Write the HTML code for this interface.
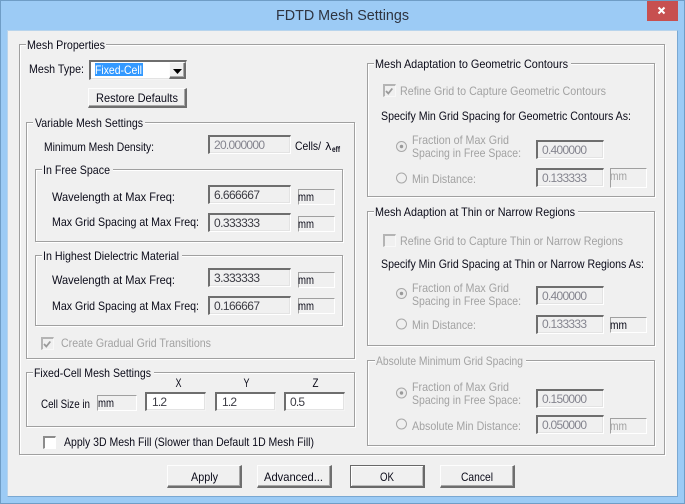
<!DOCTYPE html>
<html><head><meta charset="utf-8"><title>FDTD Mesh Settings</title>
<style>
html,body{margin:0;padding:0}
#w{position:relative;width:685px;height:504px;overflow:hidden;background:#9ccbf5;font-family:"Liberation Sans",sans-serif}
#w div{position:absolute;box-sizing:border-box}
.g{border:1px solid #a0a0a0;box-shadow:1px 1px 0 #fff,inset 1px 1px 0 #fff}
.l{background:#f0f0f0;height:12px}
.f{background:#f0f0f0;border-style:solid;border-width:2px 1px 1px 2px;border-color:#6e6e6e #fff #fff #6e6e6e;box-shadow:inset -1px -1px 0 #e3e3e3}
.w{background:#fff;border-color:#6e6e6e #f4f4f4 #f4f4f4 #6e6e6e}
.m{background:#f0f0f0;border-style:solid;border-width:1px;border-color:#a0a0a0 #fff #fff #a0a0a0}
.b{background:#f0f0f0;border-style:solid;border-width:1px 2px 2px 1px;border-color:#fdfdfd #6e6e6e #6e6e6e #fdfdfd;box-shadow:inset -1px -1px 0 #a8a8a8}
.c{border-style:solid;border-width:2px 1px 1px 2px;border-color:#8c8c8c #fff #fff #8c8c8c;background:#fff}
.c.n{background:#f0f0f0;border-color:#b4b4b4 #f8f8f8 #f8f8f8 #b4b4b4}
svg{position:absolute;left:0;top:0}
text{font-family:"Liberation Sans",sans-serif;font-size:12px;fill:#0a0a18}
.d{fill:#a2a2a2}
.v{fill:#3c3c44}
.x{fill:#85858f}
</style></head><body><div id="w">
<div style="left:0;top:0;width:685px;height:504px;border:1px solid #6f9dc6"></div>
<div style="left:647px;top:1px;width:31px;height:20px;background:#c75050"></div>
<div style="left:7px;top:30px;width:671px;height:467px;background:#f0f0f0;border:1px solid #7aa8d2;border-top-color:#b8d4ec;border-left-color:#b8d4ec"></div>

<div class="g" style="left:19px;top:44px;width:646px;height:411px"></div><div class="l" style="left:26px;top:39px;width:80px"></div>
<div class="g" style="left:26px;top:122px;width:329px;height:237px"></div><div class="l" style="left:33px;top:117px;width:112px"></div>
<div class="g" style="left:35px;top:169px;width:308px;height:73px"></div><div class="l" style="left:42px;top:164px;width:71px"></div>
<div class="g" style="left:35px;top:255px;width:308px;height:71px"></div><div class="l" style="left:42px;top:250px;width:140px"></div>
<div class="g" style="left:26px;top:372px;width:329px;height:55px"></div><div class="l" style="left:33px;top:367px;width:121px"></div>
<div class="g" style="left:367px;top:63px;width:288px;height:134px"></div><div class="l" style="left:374px;top:58px;width:197px"></div>
<div class="g" style="left:367px;top:211px;width:288px;height:135px"></div><div class="l" style="left:374px;top:206px;width:204px"></div>
<div class="g" style="left:367px;top:360px;width:288px;height:86px"></div><div class="l" style="left:375px;top:355px;width:151px"></div>

<div class="f w" style="left:89px;top:60px;width:98px;height:20px"></div>
<div style="left:95px;top:63px;width:48px;height:13px;background:#3399ff"></div>
<div class="b" style="left:169px;top:62px;width:17px;height:17px"></div>
<div class="b" style="left:88px;top:88px;width:99px;height:20px"></div>

<div class="f" style="left:208px;top:135px;width:83px;height:19px"></div>
<div class="f" style="left:208px;top:185px;width:83px;height:19px"></div><div class="m" style="left:298px;top:189px;width:37px;height:16px"></div>
<div class="f" style="left:208px;top:213px;width:83px;height:19px"></div><div class="m" style="left:298px;top:216px;width:37px;height:16px"></div>
<div class="f" style="left:208px;top:268px;width:83px;height:19px"></div><div class="m" style="left:298px;top:272px;width:37px;height:16px"></div>
<div class="f" style="left:208px;top:296px;width:83px;height:19px"></div><div class="m" style="left:298px;top:298px;width:37px;height:16px"></div>

<div class="m" style="left:97px;top:395px;width:40px;height:16px"></div>
<div class="f w" style="left:145px;top:392px;width:61px;height:19px"></div>
<div class="f w" style="left:215px;top:392px;width:61px;height:19px"></div>
<div class="f w" style="left:284px;top:392px;width:61px;height:19px"></div>

<div class="f" style="left:536px;top:140px;width:68px;height:19px"></div>
<div class="f" style="left:536px;top:168px;width:68px;height:19px"></div><div class="m" style="left:610px;top:168px;width:37px;height:20px"></div>
<div class="f" style="left:536px;top:286px;width:68px;height:19px"></div>
<div class="f" style="left:536px;top:315px;width:68px;height:19px"></div><div class="m" style="left:610px;top:317px;width:37px;height:16px"></div>
<div class="f" style="left:536px;top:389px;width:68px;height:19px"></div>
<div class="f" style="left:536px;top:415px;width:68px;height:19px"></div><div class="m" style="left:610px;top:418px;width:37px;height:16px"></div>

<div class="c n" style="left:41px;top:337px;width:13px;height:13px"></div>
<div class="c n" style="left:383px;top:84px;width:13px;height:13px"></div>
<div class="c n" style="left:383px;top:234px;width:13px;height:13px"></div>
<div class="c" style="left:43px;top:436px;width:13px;height:13px"></div>

<div class="b" style="left:167px;top:465px;width:75px;height:23px"></div>
<div class="b" style="left:257px;top:465px;width:75px;height:23px"></div>
<div class="b" style="left:350px;top:465px;width:75px;height:23px;border-color:#696969;box-shadow:inset 1px 1px 0 #fff,inset -1px -1px 0 #bdbdbd"></div>
<div class="b" style="left:440px;top:465px;width:75px;height:23px"></div>

<svg width="685" height="504" viewBox="0 0 685 504">
<text x="276" y="20" textLength="133" lengthAdjust="spacingAndGlyphs" style="font-size:15px;fill:#2e3440">FDTD Mesh Settings</text>
<path d="M658.500 7.500l6 6M664.500 7.500l-6 6" stroke="#fff" stroke-width="2" fill="none"/>

<text x="27" y="49" textLength="78" lengthAdjust="spacingAndGlyphs">Mesh Properties</text>
<text x="29" y="73" textLength="55" lengthAdjust="spacingAndGlyphs">Mesh Type:</text>
<text x="95" y="74" textLength="47" lengthAdjust="spacingAndGlyphs" style="fill:#fff">Fixed-Cell</text>
<path d="M173 69h9l-4.500 5z" fill="#000"/>
<text x="96" y="102" textLength="82" lengthAdjust="spacingAndGlyphs">Restore Defaults</text>

<text x="35" y="127" textLength="108" lengthAdjust="spacingAndGlyphs">Variable Mesh Settings</text>
<text x="44" y="151" textLength="110" lengthAdjust="spacingAndGlyphs">Minimum Mesh Density:</text>
<text x="214" y="149" textLength="51" lengthAdjust="spacing" class="x">20.000000</text>
<text x="295" y="150" textLength="26" lengthAdjust="spacingAndGlyphs">Cells/</text>
<text x="325" y="150" style="font-size:11px;font-family:'DejaVu Sans',sans-serif">λ</text>
<text x="332" y="152" textLength="8" lengthAdjust="spacingAndGlyphs" style="font-size:8px;font-weight:bold">eff</text>

<text x="43" y="174" textLength="67" lengthAdjust="spacingAndGlyphs">In Free Space</text>
<text x="52" y="201" textLength="123" lengthAdjust="spacingAndGlyphs">Wavelength at Max Freq:</text>
<text x="214" y="199" textLength="46" class="v">6.666667</text>
<text x="298" y="201" textLength="16" lengthAdjust="spacingAndGlyphs">mm</text>
<text x="52" y="226" textLength="147" lengthAdjust="spacingAndGlyphs">Max Grid Spacing at Max Freq:</text>
<text x="214" y="227" textLength="46" class="v">0.333333</text>
<text x="298" y="228" textLength="16" lengthAdjust="spacingAndGlyphs">mm</text>

<text x="43" y="260" textLength="136" lengthAdjust="spacingAndGlyphs">In Highest Dielectric Material</text>
<text x="52" y="284" textLength="123" lengthAdjust="spacingAndGlyphs">Wavelength at Max Freq:</text>
<text x="214" y="282" textLength="46" class="v">3.333333</text>
<text x="298" y="284" textLength="16" lengthAdjust="spacingAndGlyphs">mm</text>
<text x="52" y="310" textLength="147" lengthAdjust="spacingAndGlyphs">Max Grid Spacing at Max Freq:</text>
<text x="214" y="310" textLength="46" class="v">0.166667</text>
<text x="298" y="310" textLength="16" lengthAdjust="spacingAndGlyphs">mm</text>

<path d="M44 344l2.300 2.500 4-5" stroke="#9a9a9a" stroke-width="1.800" fill="none"/>
<text x="61" y="347" textLength="150" lengthAdjust="spacingAndGlyphs" class="d">Create Gradual Grid Transitions</text>

<text x="34" y="377" textLength="117" lengthAdjust="spacingAndGlyphs">Fixed-Cell Mesh Settings</text>
<text x="175.500" y="387" textLength="6" lengthAdjust="spacingAndGlyphs">X</text><text x="243.500" y="387" textLength="6" lengthAdjust="spacingAndGlyphs">Y</text><text x="312.500" y="387" textLength="6" lengthAdjust="spacingAndGlyphs">Z</text>
<text x="41" y="408" textLength="49" lengthAdjust="spacingAndGlyphs">Cell Size in</text>
<text x="98" y="407" textLength="16" lengthAdjust="spacingAndGlyphs">mm</text>
<text x="152" y="406" textLength="15" class="v">1.2</text>
<text x="222" y="406" textLength="15" class="v">1.2</text>
<text x="290" y="406" textLength="15" class="v">0.5</text>

<text x="64" y="446" textLength="250" lengthAdjust="spacingAndGlyphs">Apply 3D Mesh Fill (Slower than Default 1D Mesh Fill)</text>

<text x="191" y="481" textLength="27" lengthAdjust="spacingAndGlyphs">Apply</text>
<text x="264" y="481" textLength="59" lengthAdjust="spacingAndGlyphs">Advanced...</text>
<text x="380" y="481" textLength="14" lengthAdjust="spacingAndGlyphs">OK</text>
<text x="461" y="481" textLength="32" lengthAdjust="spacingAndGlyphs">Cancel</text>

<text x="375" y="68" textLength="193" lengthAdjust="spacingAndGlyphs">Mesh Adaptation to Geometric Contours</text>
<path d="M386 91l2.300 2.500 4-5" stroke="#9a9a9a" stroke-width="1.800" fill="none"/>
<text x="400" y="95" textLength="206" lengthAdjust="spacingAndGlyphs" class="d">Refine Grid to Capture Geometric Contours</text>
<text x="381" y="120" textLength="250" lengthAdjust="spacingAndGlyphs">Specify Min Grid Spacing for Geometric Contours As:</text>
<circle cx="401.500" cy="146.500" r="5" fill="#ececec" stroke="#a8a8a8"/><circle cx="401.500" cy="146.500" r="1.700" fill="#9a9a9a"/>
<text x="412" y="144" textLength="97" lengthAdjust="spacingAndGlyphs" class="d">Fraction of Max Grid</text>
<text x="412" y="157" textLength="109" lengthAdjust="spacingAndGlyphs" class="d">Spacing in Free Space:</text>
<text x="542" y="154" textLength="45" class="x">0.400000</text>
<circle cx="401.500" cy="178" r="5" fill="#f0f0f0" stroke="#a8a8a8"/>
<text x="412" y="183" textLength="64" lengthAdjust="spacingAndGlyphs" class="d">Min Distance:</text>
<text x="542" y="182" textLength="45" class="x">0.133333</text>
<text x="610" y="180" textLength="17" lengthAdjust="spacingAndGlyphs" class="d">mm</text>

<text x="375" y="216" textLength="200" lengthAdjust="spacingAndGlyphs">Mesh Adaption at Thin or Narrow Regions</text>
<text x="400" y="245" textLength="223" lengthAdjust="spacingAndGlyphs" class="d">Refine Grid to Capture Thin or Narrow Regions</text>
<text x="381" y="268" textLength="263" lengthAdjust="spacingAndGlyphs">Specify Min Grid Spacing at Thin or Narrow Regions As:</text>
<circle cx="401.500" cy="293.500" r="5" fill="#ececec" stroke="#a8a8a8"/><circle cx="401.500" cy="293.500" r="1.700" fill="#9a9a9a"/>
<text x="412" y="292" textLength="97" lengthAdjust="spacingAndGlyphs" class="d">Fraction of Max Grid</text>
<text x="412" y="305" textLength="109" lengthAdjust="spacingAndGlyphs" class="d">Spacing in Free Space:</text>
<text x="542" y="300" textLength="45" class="x">0.400000</text>
<circle cx="401.500" cy="324" r="5" fill="#f0f0f0" stroke="#a8a8a8"/>
<text x="412" y="329" textLength="64" lengthAdjust="spacingAndGlyphs" class="d">Min Distance:</text>
<text x="542" y="328" textLength="45" class="x">0.133333</text>
<text x="610" y="329" textLength="17" lengthAdjust="spacingAndGlyphs">mm</text>

<text x="376" y="365" textLength="147" lengthAdjust="spacingAndGlyphs" class="d">Absolute Minimum Grid Spacing</text>
<circle cx="401.500" cy="393" r="5" fill="#ececec" stroke="#a8a8a8"/><circle cx="401.500" cy="393" r="1.700" fill="#9a9a9a"/>
<text x="412" y="391" textLength="97" lengthAdjust="spacingAndGlyphs" class="d">Fraction of Max Grid</text>
<text x="412" y="404" textLength="109" lengthAdjust="spacingAndGlyphs" class="d">Spacing in Free Space:</text>
<text x="542" y="403" textLength="45" class="x">0.150000</text>
<circle cx="401.500" cy="424" r="5" fill="#f0f0f0" stroke="#a8a8a8"/>
<text x="412" y="430" textLength="109" lengthAdjust="spacingAndGlyphs" class="d">Absolute Min Distance:</text>
<text x="542" y="429" textLength="45" class="x">0.050000</text>
<text x="610" y="430" textLength="17" lengthAdjust="spacingAndGlyphs" class="d">mm</text>
</svg>
</div></body></html>
